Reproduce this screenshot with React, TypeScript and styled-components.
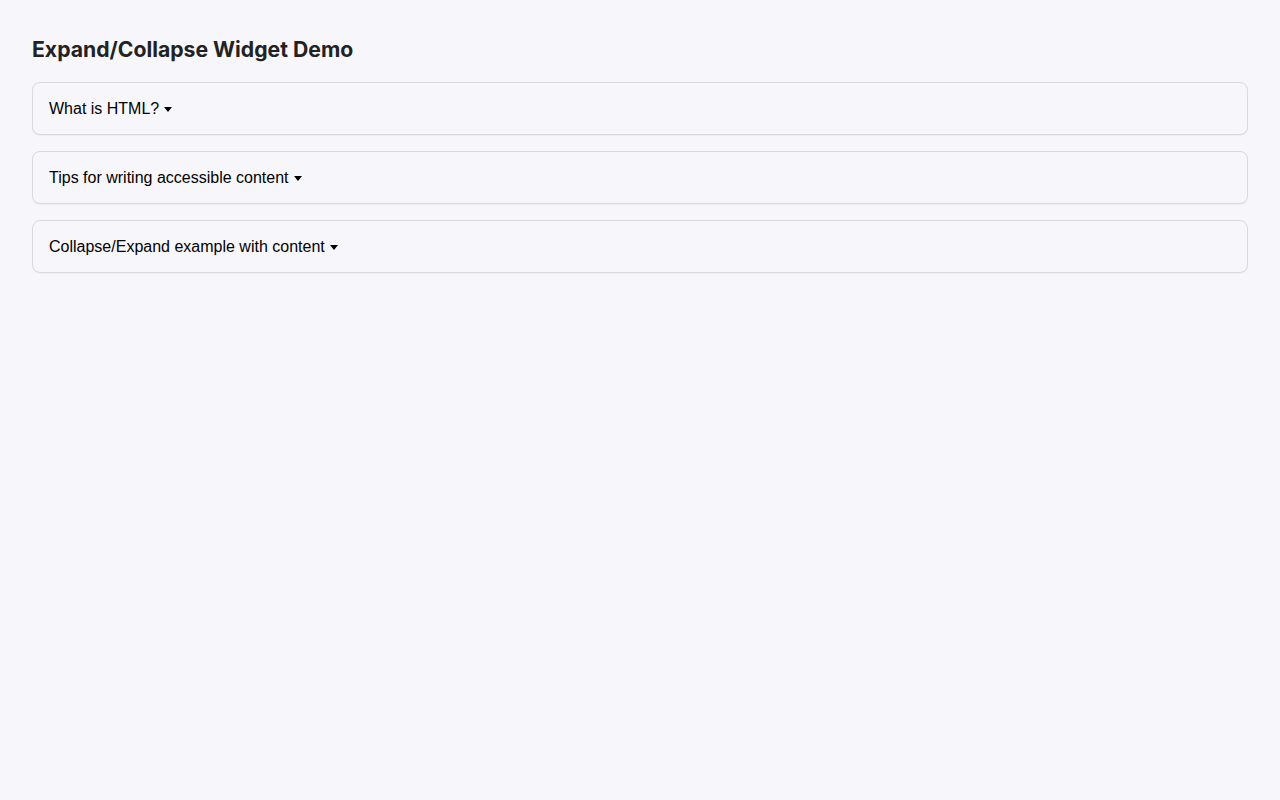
import styled, { createGlobalStyle } from "styled-components";

const GlobalStyle = createGlobalStyle`
  html, body {
    margin: 0;
    background-color: #f7f7fb;
  }
  body {
    font-family: "Liberation Sans", Arial, sans-serif;
  }
`;

const Page = styled.main`
  padding: 32px;
  min-height: 800px;
  box-sizing: border-box;
  display: flex;
  flex-direction: column;
`;

const Title = styled.h2`
  font-family: Inter, "Noto Sans", sans-serif;
  font-size: 21.2px;
  font-weight: 700;
  line-height: 28px;
  color: #222222;
  margin: 3px 0 19px;
`;

const List = styled.div`
  display: flex;
  flex-direction: column;
  gap: 16px;
`;

const Panel = styled.details`
  border: 1px solid #d9d9de;
  border-radius: 8px;
  background-color: #f7f7fb;
  box-shadow: 0 1px 1px rgba(0, 0, 0, 0.04);
`;

const Summary = styled.summary`
  list-style: none;
  display: flex;
  align-items: center;
  gap: 5px;
  padding: 16px;
  font-size: 16px;
  line-height: 19px;
  color: #000000;
  cursor: pointer;

  &::-webkit-details-marker {
    display: none;
  }
`;

const Caret = styled.span`
  display: inline-block;
  width: 0;
  height: 0;
  margin-top: 2px;
  border-left: 4.5px solid transparent;
  border-right: 4.5px solid transparent;
  border-top: 5px solid #000000;
`;

const Body = styled.div`
  padding: 0 16px 16px;
  font-size: 15px;
  line-height: 1.5;
  color: #333333;
`;

const items = [
  {
    title: "What is HTML?",
    text: "HTML is the standard markup language for documents designed to be displayed in a web browser.",
  },
  {
    title: "Tips for writing accessible content",
    text: "Use clear headings, descriptive link text and meaningful alternative text for images.",
  },
  {
    title: "Collapse/Expand example with content",
    text: "This panel holds content that is shown when the summary is toggled.",
  },
];

export default function App() {
  return (
    <>
      <GlobalStyle />
      <Page>
        <Title>Expand/Collapse Widget Demo</Title>
        <List>
          {items.map((item) => (
            <Panel key={item.title}>
              <Summary>
                {item.title}
                <Caret />
              </Summary>
              <Body>{item.text}</Body>
            </Panel>
          ))}
        </List>
      </Page>
    </>
  );
}
